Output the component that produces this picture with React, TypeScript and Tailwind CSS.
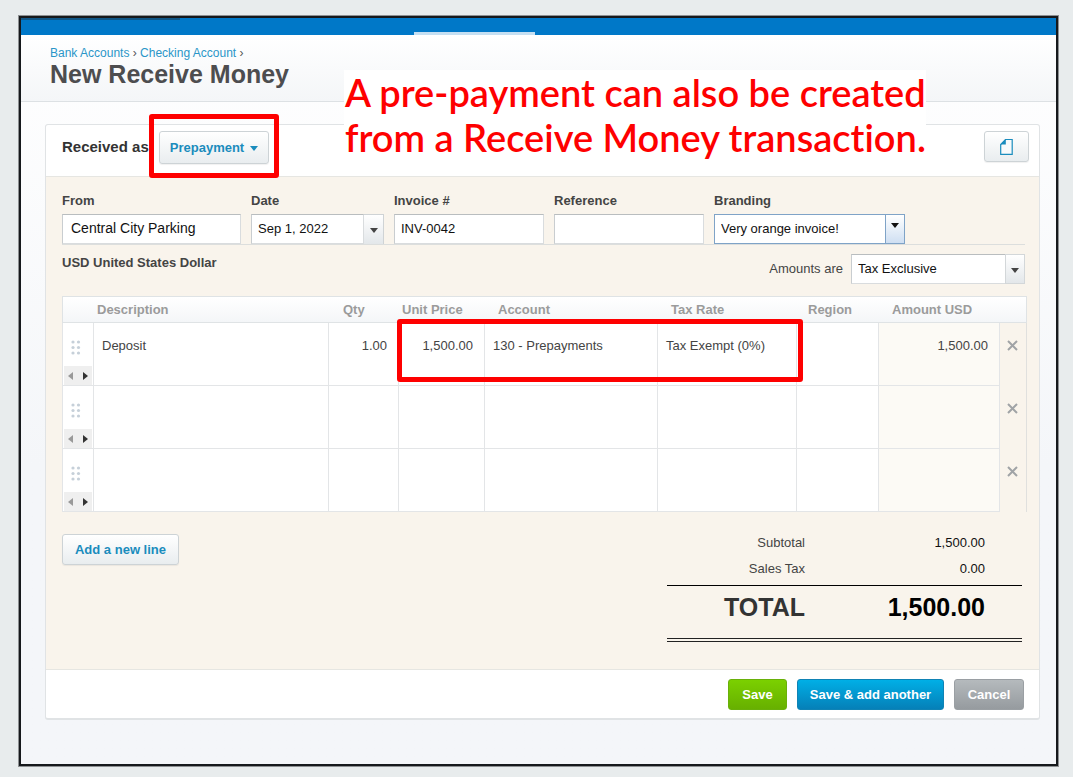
import type { ReactNode } from 'react'

interface LineItem {
  description: string
  qty: string
  price: string
  account: string
  taxRate: string
  region: string
  amount: string
}

const blank: LineItem = { description: '', qty: '', price: '', account: '', taxRate: '', region: '', amount: '' }

const lines: LineItem[] = [
  {
    description: 'Deposit',
    qty: '1.00',
    price: '1,500.00',
    account: '130 - Prepayments',
    taxRate: 'Tax Exempt (0%)',
    region: '',
    amount: '1,500.00',
  },
  blank,
  blank,
]

const softButton =
  'rounded-[3px] border border-[#cdd3d6] bg-linear-to-b from-white to-[#e9edef] font-bold text-[#1a8cbd] shadow-[0_1px_1px_rgba(0,0,0,0.06)]'

const controlBox =
  'h-[30px] w-full rounded-none border border-[#d9dcde] border-t-[#b9bdbf] border-l-[#c9cdd0] bg-white px-1.5 text-[#111] outline-none'

const inputBox = `${controlBox} pb-0.5`

function Caret({ className }: { className?: string }) {
  return (
    <svg width="8" height="5" viewBox="0 0 8 5" className={className} aria-hidden="true">
      <path d="M0 0h8L4 5z" fill="currentColor" />
    </svg>
  )
}

function PageIcon() {
  return (
    <svg width="13" height="16" viewBox="0 0 13 16" fill="none" aria-hidden="true">
      <path d="M5.5 0.5H12.2V15.3H0.7V5.5Z" stroke="#1a8cbd" strokeWidth="1.2" fill="#f8fafb" />
      <path d="M5.8 0.5V5.5H0.5Z" fill="#1a8cbd" />
    </svg>
  )
}

function DragDots() {
  return (
    <svg width="10" height="15" viewBox="0 0 10 15" fill="#c6d0d9" aria-hidden="true">
      {[2, 7.5, 13].map((y) => (
        <g key={y}>
          <circle cx="2" cy={y} r="1.6" />
          <circle cx="7.5" cy={y} r="1.6" />
        </g>
      ))}
    </svg>
  )
}

function Field({ id, label, width, children }: { id: string; label: string; width: string; children: ReactNode }) {
  return (
    <div className={width}>
      <label htmlFor={id} className="mb-[5px] block leading-4 font-bold text-[#444]">
        {label}
      </label>
      {children}
    </div>
  )
}

function LineRow({ line }: { line: LineItem }) {
  const cell = 'h-[63px] border-r border-b border-[#e3e5e7] bg-white pt-[15px] align-top leading-4'
  return (
    <tr>
      <td className="h-[63px] border-r border-b border-l border-[#e3e5e7] bg-white p-0 align-top">
        <div className="flex h-[62px] flex-col justify-between px-px">
          <div className="pt-[17px] pl-[7px]">
            <DragDots />
          </div>
          <div className="flex h-[19px] items-center gap-[10px] bg-[#efefef] pl-1">
            <button aria-label="Collapse line" className="text-[#999]">
              <svg width="5" height="8" viewBox="0 0 5 8">
                <path d="M5 0v8L0 4z" fill="currentColor" />
              </svg>
            </button>
            <button aria-label="Expand line" className="text-[#333]">
              <svg width="5" height="8" viewBox="0 0 5 8">
                <path d="M0 0v8l5-4z" fill="currentColor" />
              </svg>
            </button>
          </div>
        </div>
      </td>
      <td className={`${cell} pl-2`}>{line.description}</td>
      <td className={`${cell} pr-[11px] text-right`}>{line.qty}</td>
      <td className={`${cell} pr-[11px] text-right`}>{line.price}</td>
      <td className={`${cell} pl-2`}>{line.account}</td>
      <td className={`${cell} pl-2`}>{line.taxRate}</td>
      <td className={`${cell} pl-2`}>{line.region}</td>
      <td className="h-[63px] border-r border-b border-[#e3e5e7] bg-[#fcfaf5] pt-[15px] pr-[11px] text-right align-top leading-4">
        {line.amount}
      </td>
      <td className="border-r border-[#e0e0de] p-0 pt-[17px] pl-[7px] align-top">
        <button aria-label="Delete line" className="block text-[#a0a3a6]">
          <svg width="11" height="11" viewBox="0 0 11 11" fill="none">
            <path d="M1 1l9 9M10 1l-9 9" stroke="currentColor" strokeWidth="2" />
          </svg>
        </button>
      </td>
    </tr>
  )
}

function LineTable() {
  const head = 'border-y border-[#dfe3e5] bg-linear-to-b from-white to-[#f4f6f8] text-left font-bold text-[#9b9b9b]'
  return (
    <div className="relative mt-3">
      <table className="w-full table-fixed border-separate border-spacing-0 text-[#444]">
        <colgroup>
          <col className="w-[32px]" />
          <col />
          <col className="w-[70px]" />
          <col className="w-[86px]" />
          <col className="w-[173px]" />
          <col className="w-[139px]" />
          <col className="w-[82px]" />
          <col className="w-[121px]" />
          <col className="w-[27px]" />
        </colgroup>
        <thead>
          <tr className="h-[27px]">
            <th className={`${head} border-l`} />
            <th className={`${head} pl-[3px]`}>Description</th>
            <th className={`${head} pl-[14px]`}>Qty</th>
            <th className={`${head} pl-[3px]`}>Unit Price</th>
            <th className={`${head} pl-[13px]`}>Account</th>
            <th className={`${head} pl-[13px]`}>Tax Rate</th>
            <th className={`${head} pl-[11px]`}>Region</th>
            <th className={`${head} pl-[13px]`}>Amount USD</th>
            <th className={`${head} border-r`} />
          </tr>
        </thead>
        <tbody>
          {lines.map((line, i) => (
            <LineRow key={i} line={line} />
          ))}
        </tbody>
      </table>
      <div className="pointer-events-none absolute top-[23px] right-[224px] h-[63px] w-[406px] rounded-[3px] border-[5px] border-[#fe0000]" />
    </div>
  )
}

function Totals() {
  return (
    <dl className="mr-[5px] w-[355px] text-[#111]">
      <div className="flex h-[26px] items-center pr-[37px]">
        <dt className="w-[138px] text-right text-[#444]">Subtotal</dt>
        <dd className="flex-1 text-right">1,500.00</dd>
      </div>
      <div className="flex h-[26px] items-center pr-[37px]">
        <dt className="w-[138px] text-right text-[#444]">Sales Tax</dt>
        <dd className="flex-1 text-right">0.00</dd>
      </div>
      <div className="mt-[3px] flex h-[57px] border-t border-b-4 border-t-black border-b-[#222] pt-[3px] pr-[37px] text-[25px] leading-9 font-bold [border-bottom-style:double]">
        <dt className="w-[138px] text-right text-[#333]">TOTAL</dt>
        <dd className="flex-1 text-right text-black">1,500.00</dd>
      </div>
    </dl>
  )
}

export default function App() {
  return (
    <div className="flex min-h-screen bg-[#e8eced] pt-4 pr-[15px] pb-[11px] pl-[19px] font-['Liberation_Sans',Arial,sans-serif] text-[13px] text-[#333]">
      <div className="relative flex-1 border-2 border-[#16191c] bg-linear-to-b from-white to-[#f4f6f9] to-60% shadow-[0_0_0_1px_#8d9092]">
        <nav className="flex h-[17px] items-end bg-[#0078c8]">
          <span className="h-0.5 w-[159px] self-start bg-[#0e5687]" />
          <span className="ml-[234px] h-[3px] w-[121px] bg-[#c5dff2]" />
        </nav>

        <header className="h-[67px] border-b border-[#dde1e4] bg-linear-to-b from-white to-[#f4f6f8] pt-[11px] pl-[29px]">
          <div className="text-xs leading-[14px] text-[#555]">
            <a href="#bank" className="text-[#2a96c8]">
              Bank Accounts
            </a>{' '}
            ›{' '}
            <a href="#checking" className="text-[#2a96c8]">
              Checking Account
            </a>{' '}
            ›
          </div>
          <h1 className="text-[25px] leading-7 font-bold text-[#4d4d4f]">New Receive Money</h1>
        </header>

        <main className="mt-[22px] mr-4 ml-6 rounded-[3px] border border-b-2 border-[#e0e3e5] bg-white">
          <div className="flex h-[51px] items-start justify-between pt-1.5 pr-[10px] pl-4">
            <div className="flex items-center">
              <span className="w-[97px] text-[15px] font-bold whitespace-nowrap">Received as</span>
              <div className="relative">
                <button className={`${softButton} flex h-[33px] w-[110px] items-center justify-center gap-1.5`}>
                  Prepayment
                  <Caret className="mt-0.5" />
                </button>
                <div className="pointer-events-none absolute -top-[17px] -right-[10px] -bottom-[14px] -left-[10px] rounded-[3px] border-[5px] border-[#fe0000]" />
              </div>
            </div>
            <button aria-label="Files" className={`${softButton} flex h-[31px] w-[45px] items-center justify-center`}>
              <PageIcon />
            </button>
          </div>

          <div className="border-t border-b border-[#e6e6e2] bg-[#f9f4ec] pt-4 pr-3 pb-[27px] pl-4">
            <div className="mr-0.5 flex gap-[10px] border-b border-[#dcdedd]">
              <Field id="from" label="From" width="w-[179px]">
                <input id="from" defaultValue="Central City Parking" className={`${inputBox} pl-2 text-sm`} />
              </Field>
              <Field id="date" label="Date" width="w-[133px]">
                <div className="flex">
                  <input id="date" defaultValue="Sep 1, 2022" className={inputBox} />
                  <button
                    aria-label="Pick a date"
                    className="flex h-[30px] w-[20px] shrink-0 items-center justify-center border-t border-r border-[#cfd3d5] bg-linear-to-b from-white to-[#e3e7ea] pt-0.5 text-[#444]"
                  >
                    <Caret />
                  </button>
                </div>
              </Field>
              <Field id="invoice" label="Invoice #" width="w-[150px]">
                <input id="invoice" defaultValue="INV-0042" className={inputBox} />
              </Field>
              <Field id="reference" label="Reference" width="w-[150px]">
                <input id="reference" className={inputBox} />
              </Field>
              <Field id="branding" label="Branding" width="w-[191px]">
                <div className="relative">
                  <select
                    id="branding"
                    className="h-[30px] w-full appearance-none rounded-none border border-[#7fa3c7] bg-white px-1.5 text-[#111] outline-none"
                  >
                    <option>Very orange invoice!</option>
                  </select>
                  <span className="pointer-events-none absolute inset-y-0 right-0 flex w-[20px] justify-center border border-[#7fa3c7] bg-linear-to-b from-white to-[#cfdff2] pt-2 text-[#111]">
                    <Caret />
                  </span>
                </div>
              </Field>
            </div>

            <div className="mt-[9px] mr-0.5 flex justify-between">
              <p className="pt-px leading-4 font-bold text-[#444]">USD United States Dollar</p>
              <div className="flex items-center gap-2">
                <label htmlFor="amounts" className="text-[#444]">
                  Amounts are
                </label>
                <div className="relative w-[174px]">
                  <select id="amounts" className={`${controlBox} appearance-none`}>
                    <option>Tax Exclusive</option>
                  </select>
                  <span className="pointer-events-none absolute inset-y-0 right-0 flex w-[20px] items-center justify-center border border-[#d3d7d9] bg-linear-to-b from-white to-[#e3e7ea] pt-0.5 text-[#444]">
                    <Caret />
                  </span>
                </div>
              </div>
            </div>

            <LineTable />

            <div className="mt-[18px] flex items-start justify-between">
              <button className={`${softButton} mt-1 h-[31px] w-[117px]`}>Add a new line</button>
              <Totals />
            </div>
          </div>

          <div className="flex justify-end gap-[10px] pt-[9px] pr-[15px] pb-2 font-bold text-white">
            <button className="h-[31px] w-[59px] rounded-[3px] border border-[#69b00a] bg-linear-to-b from-[#7bd000] to-[#67b000]">
              Save
            </button>
            <button className="h-[31px] w-[147px] rounded-[3px] border border-[#0f83b5] bg-linear-to-b from-[#00afe6] to-[#0580b8]">
              Save &amp; add another
            </button>
            <button className="h-[31px] w-[70px] rounded-[3px] border border-[#9a9fa3] bg-linear-to-b from-[#b5babd] to-[#969b9f]">
              Cancel
            </button>
          </div>
        </main>

        <p className="absolute top-[52px] left-[323px] bg-white pl-px font-[Lato,sans-serif] text-[38px] leading-[45px] font-semibold whitespace-nowrap text-[#fe0000] [font-variant-ligatures:none]">
          A pre-payment can also be created
          <br />
          from a Receive Money transaction.
        </p>
      </div>
    </div>
  )
}
